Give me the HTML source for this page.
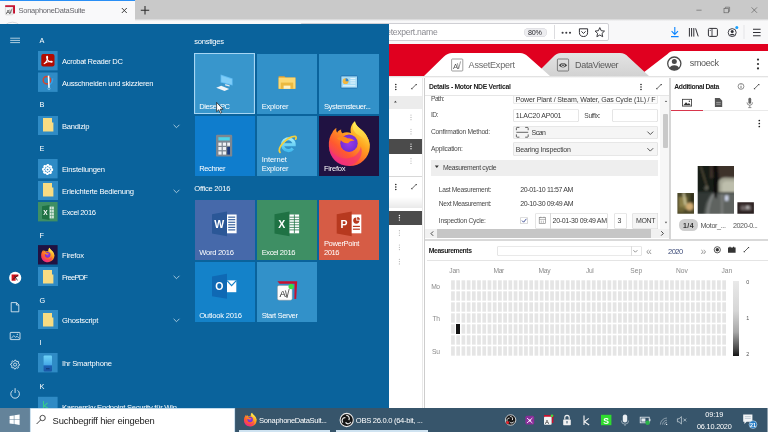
<!DOCTYPE html>
<html lang="de"><head><meta charset="utf-8"><title>SonaphoneDataSuite</title>
<style>
html,body{margin:0;padding:0;}
body{width:768px;height:432px;overflow:hidden;position:relative;background:#fff;font-family:"Liberation Sans",sans-serif;}
.t{position:absolute;white-space:nowrap;}
.r{position:absolute;}
svg{position:absolute;overflow:visible;}
</style></head><body><div id="root" style="position:absolute;left:0;top:0;width:768px;height:432px;will-change:transform;">
<div class="r" style="left:0px;top:0px;width:768px;height:19.4px;background:#c9c9c9;"></div>
<div class="r" style="left:0px;top:19.4px;width:768px;height:25px;background:#f8f8f9;"></div>
<div class="r" style="left:0px;top:19.4px;width:768px;height:1.8px;background:linear-gradient(#d2d2d2,#f8f8f9);"></div>
<div class="r" style="left:388px;top:43.6px;width:380px;height:0.8px;background:#b8001a;"></div>
<div class="r" style="left:0px;top:0px;width:135px;height:24px;background:#f9f9fa;"></div>
<div class="r" style="left:0px;top:0px;width:135px;height:1.2px;background:#2a8ff5;"></div>
<div class="t" style="left:18.50px;top:5px;font-size:7.5px;line-height:12px;color:#66666c;letter-spacing:-0.254px;">SonaphoneDataSuite</div>
<svg style="left:0;top:0" width="40" height="24" viewBox="0 0 40 24"><circle cx="12.4" cy="32.6" r="10.4" fill="#fdfdfd" stroke="#c9c9cc" stroke-width="0.7"/></svg>
<div class="r" style="left:388px;top:44.2px;width:380px;height:32px;background:#e0001f;"></div>
<div class="r" style="left:388px;top:76px;width:380px;height:332px;background:#ffffff;"></div>
<div class="r" style="left:300px;top:22.5px;width:308.5px;height:18.2px;background:#ffffff;border:0.8px solid #cfcfd4;border-radius:2px;box-sizing:border-box;"></div>
<div class="t" style="left:386.20px;top:26px;font-size:8.6px;line-height:12px;color:#8a8a90;letter-spacing:-0.283px;">etexpert.name</div>
<div class="r" style="left:523.5px;top:28px;width:23px;height:9.4px;background:#ededf0;border-radius:5px;box-shadow:inset 0 0 0 0.5px #d5d5da;"></div>
<div class="t" style="left:528.00px;top:27px;font-size:7.2px;line-height:12px;color:#2a2a2e;letter-spacing:-0.200px;">80%</div>
<div class="r" style="left:554.3px;top:25px;width:0.7px;height:14px;background:#dcdcdf;"></div>
<svg style="left:0;top:0" width="768" height="432" viewBox="0 0 768 432"><circle cx="562.6" cy="32.7" r="1.05" fill="#3a3a40"/><circle cx="566.3" cy="32.7" r="1.05" fill="#3a3a40"/><circle cx="570" cy="32.7" r="1.05" fill="#3a3a40"/><path d="M579.4 28.8H587.6V32.4A4.1 4.1 0 0 1 579.4 32.4Z" fill="none" stroke="#2f2f35" stroke-width="1" stroke-linejoin="round"/><path d="M581.4 31.4L583.5 33.4L585.6 31.4" fill="none" stroke="#2f2f35" stroke-width="1"/><path d="M599.8 27.6L601.2 30.7L604.5 31.1L602 33.4L602.7 36.7L599.8 35L596.9 36.7L597.6 33.4L595.1 31.1L598.4 30.7Z" fill="none" stroke="#2f2f35" stroke-width="0.95" stroke-linejoin="round"/><path d="M674.8 27V34.2M671.6 31.2L674.8 34.4L678 31.2M671 36.6H678.6" fill="none" stroke="#0a84ff" stroke-width="1.1"/><path d="M689.4 28V36.6M691.6 28V36.6M693.8 28V36.6M695.6 28.4L698.2 36.4" fill="none" stroke="#2f2f35" stroke-width="1"/><rect x="708.4" y="28.4" width="9" height="8" rx="1.2" fill="none" stroke="#2f2f35" stroke-width="1"/><path d="M712 28.4V36.4" stroke="#2f2f35" stroke-width="0.9"/><path d="M709.6 30.4H711" stroke="#2f2f35" stroke-width="0.7"/><circle cx="732.2" cy="32.6" r="4" fill="none" stroke="#2f2f35" stroke-width="0.9"/><circle cx="732.2" cy="31.5" r="1.5" fill="#2f2f35"/><path d="M729.4 35.2A3 2.4 0 0 1 735 35.2" fill="#2f2f35"/><circle cx="736.8" cy="27.4" r="1.5" fill="#18a0ff"/><path d="M744 25V39" stroke="#dcdcdf" stroke-width="0.7"/><path d="M753 29.2H760.6M753 32.5H760.6M753 35.8H760.6" stroke="#2f2f35" stroke-width="1.1"/><path d="M696.4 10.2H701.6" stroke="#5a5a5a" stroke-width="0.6"/><rect x="724" y="8.4" width="4.4" height="4.4" fill="none" stroke="#5a5a5a" stroke-width="0.6"/><path d="M725.4 8.4V7.2H729.6V11.4H728.4" fill="none" stroke="#5a5a5a" stroke-width="0.6"/><path d="M751.6 7.4L757 12.8M757 7.4L751.6 12.8" stroke="#5a5a5a" stroke-width="0.65"/><path d="M121.8 8L126.8 13M126.8 8L121.8 13" stroke="#2a2a2a" stroke-width="0.9"/><path d="M140.8 10.2H149.2M145 6V14.4" stroke="#2a2a2a" stroke-width="1.05"/><path d="M5.2 5.2H15V13.6H13V7H5.2Z" fill="#c8102e"/><rect x="5.4" y="7" width="7.6" height="7.8" rx="0.8" fill="#f6f6f6" stroke="#999" stroke-width="0.3"/><text x="5.9" y="13.6" font-family="Liberation Sans, sans-serif" font-size="6.2" fill="#222">A</text><path d="M9.8 9.6L10.6 13.4L12 8.6" fill="none" stroke="#222" stroke-width="0.5"/></svg>
<svg style="left:0;top:0" width="768" height="432" viewBox="0 0 768 432"><defs><linearGradient id="gt" x1="0" y1="0" x2="0" y2="1"><stop offset="0" stop-color="#e4e4e4"/><stop offset="1" stop-color="#d2d2d2"/></linearGradient></defs><path d="M768 51H674Q670 51 667.6 54L639 76H768Z" fill="#ffffff"/><path d="M534 76L553 57Q556.6 53 561 53H620Q625 53 628.4 57L649 76Z" fill="url(#gt)"/><path d="M424 76L444 56.6Q447.6 53 452 53H520Q524.6 53 528 56.6L550 76Z" fill="#ffffff"/><rect x="451.6" y="59" width="11.2" height="12" rx="0.8" fill="none" stroke="#777" stroke-width="0.7"/><text x="453" y="68.6" font-family="Liberation Sans, sans-serif" font-size="7.6" fill="#555">A</text><path d="M457.4 63.2L458.6 68.8L460.6 61.4" fill="none" stroke="#555" stroke-width="0.6"/><rect x="557.4" y="59" width="11.2" height="12" rx="0.8" fill="none" stroke="#555" stroke-width="0.7"/><path d="M558.8 65.2Q563 60.6 567.2 65.2Q563 69.8 558.8 65.2Z" fill="#444"/><circle cx="563" cy="65.2" r="1.7" fill="#ddd"/><circle cx="563" cy="65.2" r="0.9" fill="#444"/><circle cx="674.3" cy="63.6" r="6.6" fill="#fff" stroke="#4a4a4a" stroke-width="1.3"/><circle cx="674.3" cy="61.4" r="2.5" fill="#4a4a4a"/><path d="M669.6 68.2A4.8 3.8 0 0 1 679 68.2A6.4 6.4 0 0 1 669.6 68.2Z" fill="#4a4a4a"/><circle cx="758" cy="59.6" r="1.1" fill="#333"/><circle cx="758" cy="64" r="1.1" fill="#333"/><circle cx="758" cy="68.4" r="1.1" fill="#333"/></svg>
<div class="t" style="left:468.60px;top:59px;font-size:9.0px;line-height:12px;color:#6a6a6a;letter-spacing:-0.211px;">AssetExpert</div>
<div class="t" style="left:575.00px;top:59px;font-size:9.0px;line-height:12px;color:#5a5a5a;letter-spacing:-0.306px;">DataViewer</div>
<div class="t" style="left:689.80px;top:57px;font-size:9.0px;line-height:12px;color:#555;letter-spacing:-0.370px;">smoeck</div>
<div class="r" style="left:388px;top:76px;width:380px;height:2.2px;background:linear-gradient(#d9d9d9,#ffffff);"></div>
<div class="r" style="left:422px;top:78px;width:0.7px;height:330px;background:#e9e9e9;"></div>
<div class="r" style="left:424px;top:78px;width:0.9px;height:330px;background:#cdcdcd;"></div>
<div class="r" style="left:669px;top:78px;width:1.7px;height:162px;background:#d6d6d6;"></div>
<div class="r" style="left:388.5px;top:95.6px;width:33.6px;height:13px;background:#ececec;"></div>
<div class="r" style="left:388.5px;top:138.6px;width:33.6px;height:15px;background:#4b4b4b;"></div>
<div class="r" style="left:388.5px;top:176px;width:33.6px;height:0.8px;background:#d8d8d8;"></div>
<div class="r" style="left:388.5px;top:196.6px;width:33.6px;height:11.6px;background:linear-gradient(#ffffff,#e9e9e9);"></div>
<div class="r" style="left:388.5px;top:210.8px;width:33.6px;height:13.8px;background:#4b4b4b;"></div>
<div class="t" style="left:431.00px;top:93px;font-size:6.7px;line-height:12px;color:#4a4a4a;letter-spacing:-0.536px;">Path:</div>
<div class="r" style="left:512.8px;top:90px;width:145.4px;height:13.6px;background:#fbfbfb;box-shadow:inset 0 0 0 0.6px #dcdcdc;border-radius:2px;"></div>
<div class="t" style="left:515.80px;top:94px;font-size:7.0px;line-height:12px;color:#3a3a3a;letter-spacing:-0.149px;">Power Plant / Steam, Water, Gas Cycle (1L) / F</div>
<div class="r" style="left:424.6px;top:78.2px;width:235.8px;height:17.2px;background:#ffffff;"></div>
<div class="t" style="left:429.00px;top:81px;font-size:6.8px;line-height:12px;color:#222;letter-spacing:-0.287px;font-weight:bold;">Details - Motor NDE Vertical</div>
<div class="r" style="left:424.6px;top:95.2px;width:244.6px;height:0.9px;background:#e6e6e6;"></div>
<div class="t" style="left:431.00px;top:109px;font-size:6.7px;line-height:12px;color:#4a4a4a;letter-spacing:-0.488px;">ID:</div>
<div class="r" style="left:512.8px;top:108.6px;width:66.2px;height:13.8px;background:#ffffff;box-shadow:inset 0 0 0 0.6px #d4d4d4;border-radius:2px;"></div>
<div class="t" style="left:515.80px;top:110px;font-size:7.0px;line-height:12px;color:#3a3a3a;letter-spacing:-0.198px;">1LAC20 AP001</div>
<div class="t" style="left:584.30px;top:110px;font-size:6.7px;line-height:12px;color:#4a4a4a;letter-spacing:-0.382px;">Suffix:</div>
<div class="r" style="left:612.3px;top:108.6px;width:45.9px;height:13.8px;background:#ffffff;box-shadow:inset 0 0 0 0.6px #d4d4d4;border-radius:2px;"></div>
<div class="t" style="left:431.00px;top:126px;font-size:6.7px;line-height:12px;color:#4a4a4a;letter-spacing:-0.250px;">Confirmation Method:</div>
<div class="r" style="left:512.8px;top:125.5px;width:145.4px;height:13.8px;background:#f5f5f5;box-shadow:inset 0 0 0 0.6px #d9d9d9;border-radius:2px;"></div>
<div class="t" style="left:531.60px;top:127px;font-size:7.0px;line-height:12px;color:#3a3a3a;letter-spacing:-0.520px;">Scan</div>
<div class="t" style="left:431.00px;top:143px;font-size:6.7px;line-height:12px;color:#4a4a4a;letter-spacing:-0.258px;">Application:</div>
<div class="r" style="left:512.8px;top:142.4px;width:145.4px;height:13.6px;background:#f5f5f5;box-shadow:inset 0 0 0 0.6px #d9d9d9;border-radius:2px;"></div>
<div class="t" style="left:515.80px;top:144px;font-size:7.0px;line-height:12px;color:#3a3a3a;letter-spacing:-0.164px;">Bearing Inspection</div>
<div class="r" style="left:431.2px;top:159.6px;width:227px;height:16px;background:#eeeeee;"></div>
<div class="t" style="left:443.00px;top:162px;font-size:6.8px;line-height:12px;color:#444;letter-spacing:-0.341px;">Measurement cycle</div>
<div class="t" style="left:438.80px;top:184px;font-size:6.7px;line-height:12px;color:#4a4a4a;letter-spacing:-0.291px;">Last Measurement:</div>
<div class="t" style="left:520.20px;top:184px;font-size:7.0px;line-height:12px;color:#3a3a3a;letter-spacing:-0.363px;">20-01-10 11:57 AM</div>
<div class="t" style="left:438.80px;top:198px;font-size:6.7px;line-height:12px;color:#4a4a4a;letter-spacing:-0.341px;">Next Measurement:</div>
<div class="t" style="left:520.20px;top:198px;font-size:7.0px;line-height:12px;color:#3a3a3a;letter-spacing:-0.383px;">20-10-30 09:49 AM</div>
<div class="t" style="left:438.80px;top:215px;font-size:6.7px;line-height:12px;color:#4a4a4a;letter-spacing:-0.239px;">Inspection Cycle:</div>
<div class="r" style="left:520.2px;top:216.6px;width:7.8px;height:7.8px;background:#ffffff;box-shadow:inset 0 0 0 0.6px #bdbdbd;border-radius:1.6px;"></div>
<div class="r" style="left:535.4px;top:213px;width:73px;height:15.6px;background:#ffffff;box-shadow:inset 0 0 0 0.6px #d4d4d4;border-radius:2px;"></div>
<div class="r" style="left:549.6px;top:213px;width:0.6px;height:15.6px;background:#d9d9d9;"></div>
<div class="t" style="left:552.60px;top:215px;font-size:7.0px;line-height:12px;color:#3a3a3a;letter-spacing:-0.321px;">20-01-30 09:49 AM</div>
<div class="r" style="left:614px;top:213px;width:13.3px;height:15.6px;background:#ffffff;box-shadow:inset 0 0 0 0.6px #d4d4d4;border-radius:2px;"></div>
<div class="t" style="left:617.60px;top:215px;font-size:7.0px;line-height:12px;color:#3a3a3a;letter-spacing:0.000px;">3</div>
<div class="r" style="left:632.3px;top:213px;width:26px;height:15.6px;background:#f5f5f5;box-shadow:inset 0 0 0 0.6px #d9d9d9;border-radius:2px 0 0 2px;"></div>
<div class="t" style="left:636.00px;top:215px;font-size:7.0px;line-height:12px;color:#3a3a3a;letter-spacing:-0.338px;">MONT</div>
<div class="r" style="left:424.6px;top:228.8px;width:244.6px;height:9.4px;background:#f1f1f1;"></div>
<div class="r" style="left:437.4px;top:229.4px;width:213.6px;height:8.2px;background:#c6c6c6;"></div>
<div class="r" style="left:660.4px;top:96px;width:8.8px;height:132.8px;background:#f7f7f7;"></div>
<div class="r" style="left:663.4px;top:113.8px;width:4.2px;height:33.8px;background:#c9c9c9;border-radius:1px;"></div>
<div class="r" style="left:424.6px;top:239px;width:343.4px;height:1.7px;background:#d9d9d9;"></div>
<div class="t" style="left:428.80px;top:245px;font-size:6.8px;line-height:12px;color:#222;letter-spacing:-0.403px;font-weight:bold;">Measurements</div>
<div class="r" style="left:497.2px;top:245.6px;width:144.6px;height:10.6px;background:#ffffff;box-shadow:inset 0 0 0 0.6px #d4d4d4;border-radius:2px;"></div>
<div class="r" style="left:631.4px;top:246px;width:0.6px;height:9.8px;background:#dddddd;"></div>
<div class="t" style="left:668.00px;top:246px;font-size:7.6px;line-height:12px;color:#3d4b78;letter-spacing:-0.570px;">2020</div>
<div class="t" style="left:646.00px;top:243px;font-size:10.5px;line-height:16px;color:#9a9a9a;letter-spacing:0.000px;">«</div>
<div class="t" style="left:700.60px;top:243px;font-size:10.5px;line-height:16px;color:#9a9a9a;letter-spacing:0.000px;">»</div>
<div class="r" style="left:426.6px;top:259.6px;width:341.4px;height:0.9px;background:#e4e4e4;"></div>
<div class="t" style="left:449.30px;top:265px;font-size:6.7px;line-height:12px;color:#8a8a8a;letter-spacing:-0.144px;">Jan</div>
<div class="t" style="left:493.40px;top:265px;font-size:6.7px;line-height:12px;color:#8a8a8a;letter-spacing:-0.312px;">Mar</div>
<div class="t" style="left:538.60px;top:265px;font-size:6.7px;line-height:12px;color:#8a8a8a;letter-spacing:-0.332px;">May</div>
<div class="t" style="left:586.00px;top:265px;font-size:6.7px;line-height:12px;color:#8a8a8a;letter-spacing:-0.388px;">Jul</div>
<div class="t" style="left:630.20px;top:265px;font-size:6.7px;line-height:12px;color:#8a8a8a;letter-spacing:0.037px;">Sep</div>
<div class="t" style="left:676.00px;top:265px;font-size:6.7px;line-height:12px;color:#8a8a8a;letter-spacing:-0.063px;">Nov</div>
<div class="t" style="left:721.50px;top:265px;font-size:6.7px;line-height:12px;color:#8a8a8a;letter-spacing:0.006px;">Jan</div>
<div class="t" style="left:431.20px;top:281px;font-size:6.7px;line-height:12px;color:#8a8a8a;letter-spacing:-0.513px;">Mo</div>
<div class="t" style="left:432.40px;top:313px;font-size:6.7px;line-height:12px;color:#8a8a8a;letter-spacing:-0.205px;">Th</div>
<div class="t" style="left:432.00px;top:346px;font-size:6.7px;line-height:12px;color:#8a8a8a;letter-spacing:-0.208px;">Su</div>
<div class="t" style="left:746.20px;top:276px;font-size:5.4px;line-height:12px;color:#555;letter-spacing:0.000px;">0</div>
<div class="t" style="left:746.20px;top:312px;font-size:5.4px;line-height:12px;color:#555;letter-spacing:0.000px;">1</div>
<div class="t" style="left:746.20px;top:348px;font-size:5.4px;line-height:12px;color:#555;letter-spacing:0.000px;">2</div>
<svg style="left:0;top:0" width="768" height="432" viewBox="0 0 768 432"><rect x="451.10" y="280.3" width="3.7" height="75.4" fill="#e5e5e5"/><rect x="456.31" y="280.3" width="3.7" height="75.4" fill="#e5e5e5"/><rect x="461.53" y="280.3" width="3.7" height="75.4" fill="#e5e5e5"/><rect x="466.75" y="280.3" width="3.7" height="75.4" fill="#e5e5e5"/><rect x="471.96" y="280.3" width="3.7" height="75.4" fill="#e5e5e5"/><rect x="477.18" y="280.3" width="3.7" height="75.4" fill="#e5e5e5"/><rect x="482.39" y="280.3" width="3.7" height="75.4" fill="#e5e5e5"/><rect x="487.61" y="280.3" width="3.7" height="75.4" fill="#e5e5e5"/><rect x="492.82" y="280.3" width="3.7" height="75.4" fill="#e5e5e5"/><rect x="498.04" y="280.3" width="3.7" height="75.4" fill="#e5e5e5"/><rect x="503.25" y="280.3" width="3.7" height="75.4" fill="#e5e5e5"/><rect x="508.47" y="280.3" width="3.7" height="75.4" fill="#e5e5e5"/><rect x="513.68" y="280.3" width="3.7" height="75.4" fill="#e5e5e5"/><rect x="518.89" y="280.3" width="3.7" height="75.4" fill="#e5e5e5"/><rect x="524.11" y="280.3" width="3.7" height="75.4" fill="#e5e5e5"/><rect x="529.33" y="280.3" width="3.7" height="75.4" fill="#e5e5e5"/><rect x="534.54" y="280.3" width="3.7" height="75.4" fill="#e5e5e5"/><rect x="539.75" y="280.3" width="3.7" height="75.4" fill="#e5e5e5"/><rect x="544.97" y="280.3" width="3.7" height="75.4" fill="#e5e5e5"/><rect x="550.19" y="280.3" width="3.7" height="75.4" fill="#e5e5e5"/><rect x="555.40" y="280.3" width="3.7" height="75.4" fill="#e5e5e5"/><rect x="560.62" y="280.3" width="3.7" height="75.4" fill="#e5e5e5"/><rect x="565.83" y="280.3" width="3.7" height="75.4" fill="#e5e5e5"/><rect x="571.05" y="280.3" width="3.7" height="75.4" fill="#e5e5e5"/><rect x="576.26" y="280.3" width="3.7" height="75.4" fill="#e5e5e5"/><rect x="581.48" y="280.3" width="3.7" height="75.4" fill="#e5e5e5"/><rect x="586.69" y="280.3" width="3.7" height="75.4" fill="#e5e5e5"/><rect x="591.90" y="280.3" width="3.7" height="75.4" fill="#e5e5e5"/><rect x="597.12" y="280.3" width="3.7" height="75.4" fill="#e5e5e5"/><rect x="602.34" y="280.3" width="3.7" height="75.4" fill="#e5e5e5"/><rect x="607.55" y="280.3" width="3.7" height="75.4" fill="#e5e5e5"/><rect x="612.76" y="280.3" width="3.7" height="75.4" fill="#e5e5e5"/><rect x="617.98" y="280.3" width="3.7" height="75.4" fill="#e5e5e5"/><rect x="623.20" y="280.3" width="3.7" height="75.4" fill="#e5e5e5"/><rect x="628.41" y="280.3" width="3.7" height="75.4" fill="#e5e5e5"/><rect x="633.62" y="280.3" width="3.7" height="75.4" fill="#e5e5e5"/><rect x="638.84" y="280.3" width="3.7" height="75.4" fill="#e5e5e5"/><rect x="644.06" y="280.3" width="3.7" height="75.4" fill="#e5e5e5"/><rect x="649.27" y="280.3" width="3.7" height="75.4" fill="#e5e5e5"/><rect x="654.49" y="280.3" width="3.7" height="75.4" fill="#e5e5e5"/><rect x="659.70" y="280.3" width="3.7" height="75.4" fill="#e5e5e5"/><rect x="664.91" y="280.3" width="3.7" height="75.4" fill="#e5e5e5"/><rect x="670.13" y="280.3" width="3.7" height="75.4" fill="#e5e5e5"/><rect x="675.35" y="280.3" width="3.7" height="75.4" fill="#e5e5e5"/><rect x="680.56" y="280.3" width="3.7" height="75.4" fill="#e5e5e5"/><rect x="685.77" y="280.3" width="3.7" height="75.4" fill="#e5e5e5"/><rect x="690.99" y="280.3" width="3.7" height="75.4" fill="#e5e5e5"/><rect x="696.21" y="280.3" width="3.7" height="75.4" fill="#e5e5e5"/><rect x="701.42" y="280.3" width="3.7" height="75.4" fill="#e5e5e5"/><rect x="706.63" y="280.3" width="3.7" height="75.4" fill="#e5e5e5"/><rect x="711.85" y="280.3" width="3.7" height="75.4" fill="#e5e5e5"/><rect x="717.07" y="280.3" width="3.7" height="75.4" fill="#e5e5e5"/><rect x="722.28" y="280.3" width="3.7" height="75.4" fill="#e5e5e5"/><rect x="450" y="289.70" width="277" height="1.6" fill="#ffffff"/><rect x="450" y="300.70" width="277" height="1.6" fill="#ffffff"/><rect x="450" y="311.70" width="277" height="1.6" fill="#ffffff"/><rect x="450" y="322.70" width="277" height="1.6" fill="#ffffff"/><rect x="450" y="333.70" width="277" height="1.6" fill="#ffffff"/><rect x="450" y="344.70" width="277" height="1.6" fill="#ffffff"/></svg>
<div class="r" style="left:456.3px;top:324.3px;width:3.7px;height:9.4px;background:#141414;"></div>
<div class="r" style="left:733.4px;top:281.2px;width:5.5px;height:74.4px;background:linear-gradient(#e9e9e9,#d6d6d6 40%,#a8a8a8 68%,#4a4a4a 90%,#141414);"></div>
<div class="t" style="left:674.30px;top:81px;font-size:6.8px;line-height:12px;color:#222;letter-spacing:-0.353px;font-weight:bold;">Additional Data</div>
<div class="r" style="left:671.4px;top:110.2px;width:96.6px;height:0.8px;background:#e9e9e9;"></div>
<div class="r" style="left:671.4px;top:110px;width:31.4px;height:1.1px;background:#d8364c;"></div>
<svg style="left:0;top:0" width="768" height="432" viewBox="0 0 768 432"><defs><filter id="bl" x="-5%" y="-5%" width="110%" height="110%"><feGaussianBlur stdDeviation="0.9"/></filter><clipPath id="c1"><rect x="697.7" y="166" width="36.3" height="47.8"/></clipPath><clipPath id="c2"><rect x="677.4" y="193.1" width="16.6" height="20.7"/></clipPath><clipPath id="c3"><rect x="737.4" y="202.2" width="16.5" height="11.6"/></clipPath></defs><g clip-path="url(#c1)"><g filter="url(#bl)"><rect x="695" y="163" width="42" height="54" fill="#181c17"/><rect x="710" y="163" width="27" height="15" fill="#3e302b"/><path d="M718.6 194V182Q719.5 177.2 726 177.4L737 178V194Z" fill="#a4a594"/><path d="M722 193V184Q723 181 727 181L737 181.4V193Z" fill="#bdbeac"/><path d="M695 192H737V217H695Z" fill="#333836"/><path d="M737 193.4H712Q705 200 704 217H737Z" fill="#5f6361"/><path d="M714 193.6Q708.5 201 707.6 217" fill="none" stroke="#a9adab" stroke-width="0.9"/><path d="M722 194V217" stroke="#8b8f8d" stroke-width="1.2"/><path d="M712.6 163L714 196L716.8 199L718.6 177L717.6 163Z" fill="#0c0e0c"/><path d="M700.6 166L707.4 188" stroke="#8a7a5a" stroke-width="0.7"/><circle cx="706.4" cy="188.2" r="1.5" fill="none" stroke="#a8a89a" stroke-width="0.7"/><rect x="725" y="195.4" width="3.4" height="5.4" fill="#cfd6ea"/></g></g><g clip-path="url(#c2)"><g filter="url(#bl)"><rect x="675" y="191" width="21" height="25" fill="#4e4a2a"/><rect x="679" y="197" width="8" height="12" fill="#8c8048"/><path d="M683.6 193L685.4 205" stroke="#d8d2a8" stroke-width="1.6"/><ellipse cx="689.6" cy="206.6" rx="3.6" ry="3.8" fill="#d0ab72"/><rect x="678" y="207" width="6" height="5" fill="#6d6436"/><rect x="690.6" y="193" width="3.4" height="9" fill="#2c2a1a"/></g></g><g clip-path="url(#c3)"><g filter="url(#bl)"><rect x="735" y="200" width="21" height="16" fill="#2c2323"/><rect x="740.6" y="205.6" width="10.6" height="4.6" fill="#6e6565"/><rect x="746.6" y="206" width="2" height="2.6" fill="#d6d6d6"/><rect x="737.4" y="202.2" width="16.5" height="2" fill="#3a2c2c"/></g></g></svg>
<div class="r" style="left:679px;top:219.3px;width:18.8px;height:11.5px;background:#cfcfcf;border-radius:5.5px;"></div>
<div class="t" style="left:683.00px;top:220px;font-size:7px;line-height:12px;color:#333;letter-spacing:0.435px;font-weight:bold;">1/4</div>
<div class="t" style="left:700.50px;top:220px;font-size:7.2px;line-height:12px;color:#555;letter-spacing:-0.363px;">Motor_...</div>
<div class="t" style="left:733.00px;top:220px;font-size:7.2px;line-height:12px;color:#555;letter-spacing:-0.451px;">2020-0...</div>
<svg style="left:0;top:0" width="768" height="432" viewBox="0 0 768 432"><circle cx="395.8" cy="84.5" r="0.8" fill="#222"/><circle cx="395.8" cy="87" r="0.8" fill="#222"/><circle cx="395.8" cy="89.5" r="0.8" fill="#222"/><path d="M411.6 89.0L416.4 84.19999999999999" stroke="#333" stroke-width="0.75"/><path d="M415.2 83.89999999999999H416.7V85.39999999999999Z M412.8 89.3H411.3V87.8Z" fill="#333"/><circle cx="395.8" cy="184.5" r="0.8" fill="#222"/><circle cx="395.8" cy="187" r="0.8" fill="#222"/><circle cx="395.8" cy="189.5" r="0.8" fill="#222"/><path d="M411.6 189.0L416.4 184.2" stroke="#333" stroke-width="0.75"/><path d="M415.2 183.9H416.7V185.4Z M412.8 189.29999999999998H411.3V187.79999999999998Z" fill="#333"/><circle cx="411" cy="115.10000000000001" r="0.6" fill="#b4b4b4"/><circle cx="411" cy="117.4" r="0.6" fill="#b4b4b4"/><circle cx="411" cy="119.7" r="0.6" fill="#b4b4b4"/><circle cx="411" cy="129.29999999999998" r="0.6" fill="#b4b4b4"/><circle cx="411" cy="131.6" r="0.6" fill="#b4b4b4"/><circle cx="411" cy="133.9" r="0.6" fill="#b4b4b4"/><circle cx="411" cy="158.7" r="0.6" fill="#b4b4b4"/><circle cx="411" cy="161" r="0.6" fill="#b4b4b4"/><circle cx="411" cy="163.3" r="0.6" fill="#b4b4b4"/><circle cx="411" cy="144.1" r="0.7" fill="#ffffff"/><circle cx="411" cy="146.4" r="0.7" fill="#ffffff"/><circle cx="411" cy="148.70000000000002" r="0.7" fill="#ffffff"/><circle cx="399.4" cy="215.5" r="0.7" fill="#ffffff"/><circle cx="399.4" cy="217.8" r="0.7" fill="#ffffff"/><circle cx="399.4" cy="220.10000000000002" r="0.7" fill="#ffffff"/><circle cx="399.4" cy="230.7" r="0.6" fill="#b4b4b4"/><circle cx="399.4" cy="233" r="0.6" fill="#b4b4b4"/><circle cx="399.4" cy="235.3" r="0.6" fill="#b4b4b4"/><circle cx="399.4" cy="245.0" r="0.6" fill="#b4b4b4"/><circle cx="399.4" cy="247.3" r="0.6" fill="#b4b4b4"/><circle cx="399.4" cy="249.60000000000002" r="0.6" fill="#b4b4b4"/><circle cx="399.4" cy="259.3" r="0.6" fill="#b4b4b4"/><circle cx="399.4" cy="261.6" r="0.6" fill="#b4b4b4"/><circle cx="399.4" cy="263.90000000000003" r="0.6" fill="#b4b4b4"/><path d="M394 102.6L395.4 100.8L396.8 102.6Z" fill="#444"/><circle cx="641" cy="84.5" r="0.8" fill="#222"/><circle cx="641" cy="87" r="0.8" fill="#222"/><circle cx="641" cy="89.5" r="0.8" fill="#222"/><path d="M656.6 89.0L661.4 84.19999999999999" stroke="#333" stroke-width="0.75"/><path d="M660.2 83.89999999999999H661.7V85.39999999999999Z M657.8 89.3H656.3V87.8Z" fill="#333"/><circle cx="741" cy="86.4" r="2.9" fill="none" stroke="#444" stroke-width="0.6"/><path d="M741 85.8V88.2M741 84.4V85" stroke="#444" stroke-width="0.7"/><path d="M754.2 89.0L759.0 84.19999999999999" stroke="#333" stroke-width="0.75"/><path d="M757.8000000000001 83.89999999999999H759.3000000000001V85.39999999999999Z M755.4 89.3H753.9V87.8Z" fill="#333"/><path d="M516.4 130.2V128.2Q516.4 127.4 517.2 127.4H519.4M525.2 127.4H527.4Q528.2 127.4 528.2 128.2V130.2M528.2 134.4V136.4Q528.2 137.2 527.4 137.2H525.2M519.4 137.2H517.2Q516.4 137.2 516.4 136.4V134.4M516.4 132.3H528.2" fill="none" stroke="#333" stroke-width="0.75"/><path d="M647.4 131.6L650.3 134.5L653.2 131.6" fill="none" stroke="#555" stroke-width="1"/><path d="M647.4 148.2L650.3 151.1L653.2 148.2" fill="none" stroke="#555" stroke-width="1"/><path d="M633.4 250.2L635.4 252.2L637.4 250.2" fill="none" stroke="#666" stroke-width="0.7"/><path d="M434.8 165.4H438.8L436.8 168Z" fill="#333"/><path d="M522 220.6L523.6 222.2L526.4 218.8" fill="none" stroke="#2c3e8c" stroke-width="0.9"/><rect x="539.2" y="217.6" width="6.4" height="5.8" fill="none" stroke="#777" stroke-width="0.6"/><path d="M539.2 219.4H545.6M540.8 216.6V218M544 216.6V218M541.3 220.6V222.8M543.4 220.6V222.8" stroke="#777" stroke-width="0.5"/><path d="M433.2 231.4L431 233.6L433.2 235.8" fill="none" stroke="#333" stroke-width="0.9"/><path d="M661.2 231.2L663.4 233.4L661.2 235.6" fill="none" stroke="#333" stroke-width="0.9"/><path d="M664.8 102L666 100.4L667.2 102Z" fill="#555"/><path d="M664.8 221.8L666 223.4L667.2 221.8Z" fill="#555"/><circle cx="717.3" cy="249.8" r="3.1" fill="none" stroke="#333" stroke-width="0.8"/><circle cx="717.3" cy="249.8" r="1.7" fill="#333"/><path d="M728 247.6H729.4V246.8H730.6V247.6H733V246.8H734.2V247.6H735.6V252.8H728Z" fill="#333"/><path d="M744.0 252.0L748.8 247.2" stroke="#333" stroke-width="0.75"/><path d="M747.6 246.9H749.1V248.4Z M745.1999999999999 252.29999999999998H743.6999999999999V250.79999999999998Z" fill="#333"/><rect x="682.4" y="99.3" width="9.2" height="6.8" fill="none" stroke="#333" stroke-width="0.8"/><path d="M683.4 105.2L686 102.2L687.8 104L689 103L690.8 105.2Z" fill="#333"/><circle cx="689.4" cy="101.2" r="0.7" fill="#333"/><path d="M714.9 98.1H719.6L722.2 100.7V107H714.9Z" fill="#555"/><path d="M716.2 102.4H720.8M716.2 104.2H720.8" stroke="#e8e8e8" stroke-width="0.5"/><rect x="748.4" y="97.8" width="2.8" height="6" rx="1.4" fill="#666"/><path d="M747 102.4A2.8 2.8 0 0 0 752.6 102.4M749.8 105.2V107.4M748.2 107.6H751.4" fill="none" stroke="#666" stroke-width="0.7"/><circle cx="759.3" cy="120.5" r="0.85" fill="#222"/><circle cx="759.3" cy="123.5" r="0.85" fill="#222"/><circle cx="759.3" cy="126.5" r="0.85" fill="#222"/></svg>
<div class="r" style="left:0px;top:24px;width:388.7px;height:384px;background:#0a639c;"></div>
<div class="t" style="left:39.50px;top:35px;font-size:7.3px;line-height:12px;color:#ffffff;letter-spacing:0.000px;">A</div>
<div class="t" style="left:62.00px;top:56px;font-size:7.6px;line-height:12px;color:#ffffff;letter-spacing:-0.332px;">Acrobat Reader DC</div>
<div class="t" style="left:62.00px;top:78px;font-size:7.6px;line-height:12px;color:#ffffff;letter-spacing:-0.268px;">Ausschneiden und skizzieren</div>
<div class="t" style="left:39.50px;top:99px;font-size:7.3px;line-height:12px;color:#ffffff;letter-spacing:0.000px;">B</div>
<div class="t" style="left:62.00px;top:121px;font-size:7.6px;line-height:12px;color:#ffffff;letter-spacing:-0.235px;">Bandizip</div>
<div class="t" style="left:39.50px;top:143px;font-size:7.3px;line-height:12px;color:#ffffff;letter-spacing:0.000px;">E</div>
<div class="t" style="left:62.00px;top:164px;font-size:7.6px;line-height:12px;color:#ffffff;letter-spacing:-0.220px;">Einstellungen</div>
<div class="t" style="left:62.00px;top:186px;font-size:7.6px;line-height:12px;color:#ffffff;letter-spacing:-0.234px;">Erleichterte Bedienung</div>
<div class="t" style="left:62.00px;top:207px;font-size:7.6px;line-height:12px;color:#ffffff;letter-spacing:-0.402px;">Excel 2016</div>
<div class="t" style="left:39.50px;top:230px;font-size:7.3px;line-height:12px;color:#ffffff;letter-spacing:0.000px;">F</div>
<div class="t" style="left:62.00px;top:250px;font-size:7.6px;line-height:12px;color:#ffffff;letter-spacing:-0.203px;">Firefox</div>
<div class="t" style="left:62.00px;top:272px;font-size:7.6px;line-height:12px;color:#ffffff;letter-spacing:-0.803px;">FreePDF</div>
<div class="t" style="left:39.50px;top:295px;font-size:7.3px;line-height:12px;color:#ffffff;letter-spacing:0.000px;">G</div>
<div class="t" style="left:62.00px;top:315px;font-size:7.6px;line-height:12px;color:#ffffff;letter-spacing:-0.192px;">Ghostscript</div>
<div class="t" style="left:39.50px;top:337px;font-size:7.3px;line-height:12px;color:#ffffff;letter-spacing:0.000px;">I</div>
<div class="t" style="left:62.00px;top:358px;font-size:7.6px;line-height:12px;color:#ffffff;letter-spacing:-0.185px;">Ihr Smartphone</div>
<div class="t" style="left:39.50px;top:381px;font-size:7.3px;line-height:12px;color:#ffffff;letter-spacing:0.000px;">K</div>
<div class="t" style="left:62.00px;top:402px;font-size:7.6px;line-height:12px;color:#ffffff;letter-spacing:-0.246px;">Kaspersky Endpoint Security für Win</div>
<div class="r" style="left:38px;top:115.5px;width:19.6px;height:19.4px;background:#2f8bc5;"></div>
<svg style="left:42.6px;top:118.4px" width="11" height="14" viewBox="0 0 11 14"><path d="M0 0H9V4.6H10.4V13.6H0Z" fill="#f8dc82"/></svg>
<svg style="left:173px;top:123.5px" width="7" height="5" viewBox="0 0 7 5"><path d="M0.6 0.8L3.5 3.7L6.4 0.8" fill="none" stroke="#c5dcea" stroke-width="0.8"/></svg>
<div class="r" style="left:38px;top:180.5px;width:19.6px;height:19.4px;background:#2f8bc5;"></div>
<svg style="left:42.6px;top:183.4px" width="11" height="14" viewBox="0 0 11 14"><path d="M0 0H9V4.6H10.4V13.6H0Z" fill="#f8dc82"/></svg>
<svg style="left:173px;top:188.5px" width="7" height="5" viewBox="0 0 7 5"><path d="M0.6 0.8L3.5 3.7L6.4 0.8" fill="none" stroke="#c5dcea" stroke-width="0.8"/></svg>
<div class="r" style="left:38px;top:267.0px;width:19.6px;height:19.4px;background:#2f8bc5;"></div>
<svg style="left:42.6px;top:269.9px" width="11" height="14" viewBox="0 0 11 14"><path d="M0 0H9V4.6H10.4V13.6H0Z" fill="#f8dc82"/></svg>
<svg style="left:173px;top:275.0px" width="7" height="5" viewBox="0 0 7 5"><path d="M0.6 0.8L3.5 3.7L6.4 0.8" fill="none" stroke="#c5dcea" stroke-width="0.8"/></svg>
<div class="r" style="left:38px;top:310.0px;width:19.6px;height:19.4px;background:#2f8bc5;"></div>
<svg style="left:42.6px;top:312.9px" width="11" height="14" viewBox="0 0 11 14"><path d="M0 0H9V4.6H10.4V13.6H0Z" fill="#f8dc82"/></svg>
<svg style="left:173px;top:318.0px" width="7" height="5" viewBox="0 0 7 5"><path d="M0.6 0.8L3.5 3.7L6.4 0.8" fill="none" stroke="#c5dcea" stroke-width="0.8"/></svg>
<div class="t" style="left:194.30px;top:36px;font-size:7.6px;line-height:12px;color:#ffffff;letter-spacing:-0.301px;">sonstiges</div>
<div class="t" style="left:194.30px;top:183px;font-size:7.6px;line-height:12px;color:#ffffff;letter-spacing:-0.252px;">Office 2016</div>
<div class="r" style="left:193.9px;top:53px;width:60.9px;height:60.5px;background:#3896cc;box-shadow:inset 0 0 0 1.1px #a6d6f4;"></div>
<div class="r" style="left:257px;top:53.5px;width:60px;height:60px;background:#3291c9;"></div>
<div class="r" style="left:319.2px;top:53.5px;width:60px;height:60px;background:#3291c9;"></div>
<div class="r" style="left:194.5px;top:116px;width:60px;height:60px;background:#0f7dcd;"></div>
<div class="r" style="left:257px;top:116px;width:60px;height:60px;background:#3291c9;"></div>
<div class="r" style="left:319.2px;top:116px;width:60px;height:60px;background:#201242;"></div>
<div class="r" style="left:194.5px;top:200px;width:60px;height:60px;background:#4669aa;"></div>
<div class="r" style="left:257px;top:200px;width:60px;height:60px;background:#3e8f64;"></div>
<div class="r" style="left:319.2px;top:200px;width:60px;height:60px;background:#d65c45;"></div>
<div class="r" style="left:194.5px;top:262.2px;width:60px;height:60px;background:#1482c9;"></div>
<div class="r" style="left:257px;top:262.2px;width:60px;height:60px;background:#3291c9;"></div>
<div class="t" style="left:199.20px;top:101px;font-size:7.6px;line-height:12px;color:#ffffff;letter-spacing:-0.477px;">Dieser PC</div>
<div class="t" style="left:261.70px;top:101px;font-size:7.6px;line-height:12px;color:#ffffff;letter-spacing:-0.216px;">Explorer</div>
<div class="t" style="left:323.90px;top:101px;font-size:7.6px;line-height:12px;color:#ffffff;letter-spacing:-0.376px;">Systemsteuer...</div>
<div class="t" style="left:199.20px;top:163px;font-size:7.6px;line-height:12px;color:#ffffff;letter-spacing:-0.405px;">Rechner</div>
<div class="t" style="left:261.70px;top:154px;font-size:7.6px;line-height:12px;color:#ffffff;letter-spacing:-0.066px;">Internet</div>
<div class="t" style="left:261.70px;top:163px;font-size:7.6px;line-height:12px;color:#ffffff;letter-spacing:-0.216px;">Explorer</div>
<div class="t" style="left:323.90px;top:163px;font-size:7.6px;line-height:12px;color:#ffffff;letter-spacing:-0.270px;">Firefox</div>
<div class="t" style="left:199.20px;top:247px;font-size:7.6px;line-height:12px;color:#ffffff;letter-spacing:-0.281px;">Word 2016</div>
<div class="t" style="left:261.70px;top:247px;font-size:7.6px;line-height:12px;color:#ffffff;letter-spacing:-0.424px;">Excel 2016</div>
<div class="t" style="left:323.90px;top:238px;font-size:7.6px;line-height:12px;color:#ffffff;letter-spacing:-0.364px;">PowerPoint</div>
<div class="t" style="left:323.90px;top:247px;font-size:7.6px;line-height:12px;color:#ffffff;letter-spacing:-0.437px;">2016</div>
<div class="t" style="left:199.20px;top:310px;font-size:7.6px;line-height:12px;color:#ffffff;letter-spacing:-0.220px;">Outlook 2016</div>
<div class="t" style="left:261.70px;top:310px;font-size:7.6px;line-height:12px;color:#ffffff;letter-spacing:-0.386px;">Start Server</div>
<svg style="left:0;top:0" width="768" height="432" viewBox="0 0 768 432"><rect x="38" y="51.00" width="19.6" height="19.4" fill="#2f8bc5"/><rect x="38" y="72.50" width="19.6" height="19.4" fill="#2f8bc5"/><rect x="38" y="159.00" width="19.6" height="19.4" fill="#2f8bc5"/><rect x="38" y="202.00" width="19.6" height="19.4" fill="#3e8f64"/><rect x="38" y="245.10" width="19.6" height="19.4" fill="#201242"/><rect x="38" y="353.00" width="19.6" height="19.4" fill="#2f8bc5"/><rect x="38" y="396.8" width="19.6" height="11.2" fill="#2f8bc5"/><rect x="41.3" y="54" width="13.2" height="12.6" rx="2" fill="#b30b00"/><path d="M44.2 63.6C46.5 62 47.6 59.3 47.6 57.2C47.6 56 46.6 56 46.6 57.2C46.6 59.5 49.3 62.2 51.4 62.2C52.6 62.2 52.4 61.2 51.2 61.2C49 61.2 46 62.3 44.2 63.6Z" fill="none" stroke="#fff" stroke-width="1.1" stroke-linejoin="round"/><circle cx="46.9" cy="80.2" r="3.7" fill="none" stroke="#d8452b" stroke-width="1.5"/><path d="M49.6 84.6Q53 82.6 52.6 78.4" fill="none" stroke="#3aa0e8" stroke-width="1.3"/><path d="M48.5 75.6L49 88" stroke="#ffffff" stroke-width="1.5"/><circle cx="49" cy="88.6" r="1.1" fill="none" stroke="#8fd0f5" stroke-width="0.6"/><polygon points="52.33,169.27 52.28,170.19 51.01,170.72 50.71,171.36 51.11,172.68 50.42,173.30 49.15,172.78 48.48,173.02 47.83,174.23 46.91,174.18 46.38,172.91 45.74,172.61 44.42,173.01 43.80,172.32 44.32,171.05 44.08,170.38 42.87,169.73 42.92,168.81 44.19,168.28 44.49,167.64 44.09,166.32 44.78,165.70 46.05,166.22 46.72,165.98 47.37,164.77 48.29,164.82 48.82,166.09 49.46,166.39 50.78,165.99 51.40,166.68 50.88,167.95 51.12,168.62" fill="none" stroke="#ffffff" stroke-width="1.6" stroke-linejoin="round"/><circle cx="47.6" cy="169.5" r="1.67" fill="none" stroke="#ffffff" stroke-width="1.6"/><path d="M42 206.3L49.6 205V220L42 218.7Z" fill="#1f7244"/><rect x="49.6" y="206.6" width="4.2" height="11.8" fill="#d9eadf"/><path d="M49.6 209.5H53.8M49.6 212.5H53.8M49.6 215.5H53.8M51.7 206.6V218.4" stroke="#3e8f64" stroke-width="0.5"/><text x="43.3" y="215" font-family="Liberation Sans, sans-serif" font-weight="bold" font-size="6.6" fill="#fff">X</text><defs><linearGradient id="ph" x1="0" y1="0" x2="0" y2="1"><stop offset="0" stop-color="#6fd3f7"/><stop offset="0.62" stop-color="#43a6e6"/><stop offset="0.63" stop-color="#1c62b5"/><stop offset="1" stop-color="#1a57a6"/></linearGradient></defs><rect x="43.6" y="355.6" width="8.4" height="15.8" rx="1" fill="url(#ph)"/><rect x="46" y="368.4" width="3.6" height="0.8" fill="#0d2f66"/><path d="M43.5 401V408M47.6 402.8L44 406L47.8 408" fill="none" stroke="#36c98e" stroke-width="1.1"/><path d="M10.2 38.2H20M10.2 40.4H20M10.2 42.6H20" stroke="#e6f0f6" stroke-width="0.75"/><circle cx="15.2" cy="277.8" r="6.1" fill="#fff"/><path d="M11.6 274.6H18.4V276.2L15.6 277.4V280.8H11.6Z" fill="#d4101c"/><path d="M12.6 279.6L17.8 275.4M14.4 275.6L17.4 280.4" stroke="#222" stroke-width="0.8"/><path d="M11.2 302.6H16.6L18.8 304.8V311.8H11.2Z M16.4 302.8V305H18.6" fill="none" stroke="#f0f6fa" stroke-width="0.8"/><rect x="10.2" y="332.4" width="9.8" height="7.2" rx="0.6" fill="none" stroke="#f0f6fa" stroke-width="0.8"/><path d="M11 338.6L13.8 335.6L15.6 337.4L17 336.2L19.4 338.6" fill="none" stroke="#f0f6fa" stroke-width="0.7"/><circle cx="17.3" cy="334.3" r="0.6" fill="#f0f6fa"/><polygon points="19.57,364.38 19.53,365.26 18.33,365.76 18.04,366.36 18.42,367.61 17.77,368.20 16.57,367.70 15.93,367.93 15.32,369.07 14.44,369.03 13.94,367.83 13.34,367.54 12.09,367.92 11.50,367.27 12.00,366.07 11.77,365.43 10.63,364.82 10.67,363.94 11.87,363.44 12.16,362.84 11.78,361.59 12.43,361.00 13.63,361.50 14.27,361.27 14.88,360.13 15.76,360.17 16.26,361.37 16.86,361.66 18.11,361.28 18.70,361.93 18.20,363.13 18.43,363.77" fill="none" stroke="#f0f6fa" stroke-width="0.8" stroke-linejoin="round"/><circle cx="15.1" cy="364.6" r="1.57" fill="none" stroke="#f0f6fa" stroke-width="0.8"/><path d="M12.6 390.4A4.3 4.3 0 1 0 17.6 390.4" fill="none" stroke="#f0f6fa" stroke-width="0.85"/><path d="M15.1 388.2V393" stroke="#f0f6fa" stroke-width="0.85"/></svg>
<svg style="left:0;top:0" width="768" height="432" viewBox="0 0 768 432"><polygon points="220.6,74.6 232.6,78.5 232.6,85.4 220.6,82.6" fill="#62bdf3"/><polygon points="221.4,75.8 231.8,79.2 231.8,84.4 221.4,81.8" fill="#7fcdf8"/><polygon points="225.2,84 229.6,85.2 229.6,86.6 225.2,85.4" fill="#dfe7ee"/><polygon points="216.2,87.8 221.2,85.8 229.2,89 224.6,91" fill="#f1f5f8"/><path d="M278.6 76.2H284.4L285.6 77.4H295.4V88.8H278.6Z" fill="#e6a02c"/><rect x="278.6" y="77.6" width="16.8" height="11.2" fill="#fbd973"/><path d="M280.8 88.8V82.6H293.2V88.8Z" fill="#eab940"/><rect x="283.6" y="85.6" width="6.8" height="3.2" fill="#fdf1c4"/><rect x="340.9" y="75.9" width="16.6" height="12.2" rx="0.8" fill="#a6dcf6" stroke="#226fae" stroke-width="0.9"/><circle cx="345.6" cy="81.2" r="2.9" fill="#f6b73c"/><path d="M345.6 81.2V78.3A2.9 2.9 0 0 1 348.5 81.2Z" fill="#2f86d2"/><path d="M350.4 78.6H355.4M350.4 80.8H355.4M350.4 83H355.4M343 85.8H355.4" stroke="#e9f6fd" stroke-width="1"/><rect x="216" y="134.8" width="16.2" height="21.8" rx="1.2" fill="#7c8691"/><rect x="218.4" y="137.2" width="11.4" height="3.3" fill="#4dd2e8"/><rect x="218.4" y="142.6" width="3.2" height="3.2" fill="#eef1f4"/><rect x="222.8" y="142.6" width="3.2" height="3.2" fill="#eef1f4"/><rect x="218.4" y="147.0" width="3.2" height="3.2" fill="#eef1f4"/><rect x="222.8" y="147.0" width="3.2" height="3.2" fill="#eef1f4"/><rect x="218.4" y="151.4" width="3.2" height="3.2" fill="#eef1f4"/><rect x="222.8" y="151.4" width="3.2" height="3.2" fill="#eef1f4"/><rect x="227.2" y="142.6" width="2.8" height="3.2" fill="#eef1f4"/><rect x="227.2" y="147" width="2.8" height="7.6" fill="#1c3a7c"/><defs><linearGradient id="ieg" x1="0" y1="0" x2="0" y2="1"><stop offset="0" stop-color="#9beafc"/><stop offset="1" stop-color="#45bdf0"/></linearGradient></defs><g transform="translate(288.4,144.3)"><path d="M-5.6 0.4H5.8A5.9 5.9 0 1 0 4.4 4.2" fill="none" stroke="url(#ieg)" stroke-width="3.1"/></g><path d="M280 152.4Q277.4 149 283.6 142.4Q290 136.2 295 136.4Q297 136.9 295.6 139.2" fill="none" stroke="#f2cf3c" stroke-width="1.7" stroke-linecap="round"/><defs><linearGradient id="ff1" x1="0.85" y1="0.1" x2="0.2" y2="0.95"><stop offset="0" stop-color="#ffe94a"/><stop offset="0.35" stop-color="#ffa320"/><stop offset="0.7" stop-color="#ff5a2e"/><stop offset="1" stop-color="#f0307a"/></linearGradient><radialGradient id="ff2" cx="0.5" cy="0.5" r="0.6"><stop offset="0" stop-color="#9b3bea"/><stop offset="1" stop-color="#6a2bd0"/></radialGradient><linearGradient id="ff3" x1="0.5" y1="0" x2="0.5" y2="1"><stop offset="0" stop-color="#fff15a"/><stop offset="1" stop-color="#ffb52a"/></linearGradient></defs><g transform="translate(349.4,145.6) scale(1.0000)"><path d="M-20.5 1C-21 -5 -19.5 -10 -17 -13.2C-16.4 -15 -14.6 -16.6 -13 -17.6C-13.4 -15.6 -13 -14 -12.2 -12.8C-11.6 -14.4 -10 -15.6 -8.2 -16C-8.6 -14.4 -8 -13.2 -7 -12.4C-4 -13.6 -1 -13.4 1.6 -12.6C0.4 -17 2 -22 5.6 -24.4C6 -20.4 9.4 -18.4 12.6 -15.4C17 -11.4 20.6 -5.4 20.4 1.6C20 12 11 20.5 0 20.5C-11 20.5 -20 12 -20.5 1Z" fill="url(#ff1)"/><path d="M5.6 -24.4C6 -20.4 9.4 -18.4 12.6 -15.4C17 -11.4 20.6 -5.4 20.4 1.6C19 -4 15 -7.4 10.6 -9.6C5 -12.4 0.6 -18 5.6 -24.4Z" fill="url(#ff3)"/><circle cx="-0.4" cy="-2.4" r="8.7" fill="url(#ff2)"/><path d="M-12.5 -7.5C-9 -10 -4.5 -9.6 -2 -7.4C1 -7.6 3.6 -6.6 5.2 -4.6C2.6 -5.2 0.4 -4.4 -1 -2.6C-3.6 -2 -6.4 -2.8 -8 -4.8C-10 -5.2 -11.6 -6 -12.5 -7.5Z" fill="#ff8a1e"/><path d="M-20.5 1C-18 8.6 -10.6 13.6 -2 12.8C5.6 12 10.4 7.4 11.4 1C13.6 6 12 12.6 7 16.6C2 20.4 -5.4 21.2 -11.6 17.4C-17 14 -20 8 -20.5 1Z" fill="#f0288a" opacity="0.55"/></g><polygon points="212.0,214.2 227.0,211.6 227.0,236.2 212.0,233.6" fill="#2b5797"/><text x="219.3" y="228.0" text-anchor="middle" font-family="Liberation Sans, sans-serif" font-weight="bold" font-size="10.5" fill="#fff">W</text><rect x="227.0" y="214.5" width="9.6" height="18.8" fill="#fff"/><rect x="228.2" y="216.60" width="7" height="1.1" fill="#2b5797"/><rect x="228.2" y="219.15" width="7" height="1.1" fill="#2b5797"/><rect x="228.2" y="221.70" width="7" height="1.1" fill="#2b5797"/><rect x="228.2" y="224.25" width="7" height="1.1" fill="#2b5797"/><rect x="228.2" y="226.80" width="7" height="1.1" fill="#2b5797"/><rect x="228.2" y="229.35" width="7" height="1.1" fill="#2b5797"/><polygon points="274.5,214.2 289.5,211.6 289.5,236.2 274.5,233.6" fill="#1f7244"/><text x="281.8" y="228.0" text-anchor="middle" font-family="Liberation Sans, sans-serif" font-weight="bold" font-size="10.5" fill="#fff">X</text><rect x="289.5" y="214.5" width="9.6" height="18.8" fill="#fff"/><rect x="289.5" y="216.70" width="9.6" height="0.9" fill="#1f7244" opacity="0.85"/><rect x="289.5" y="219.25" width="9.6" height="0.9" fill="#1f7244" opacity="0.85"/><rect x="289.5" y="221.80" width="9.6" height="0.9" fill="#1f7244" opacity="0.85"/><rect x="289.5" y="224.35" width="9.6" height="0.9" fill="#1f7244" opacity="0.85"/><rect x="289.5" y="226.90" width="9.6" height="0.9" fill="#1f7244" opacity="0.85"/><rect x="289.5" y="229.45" width="9.6" height="0.9" fill="#1f7244" opacity="0.85"/><rect x="293.9" y="214.5" width="0.9" height="18.8" fill="#1f7244" opacity="0.85"/><polygon points="336.7,214.2 351.7,211.6 351.7,236.2 336.7,233.6" fill="#b7391f"/><text x="344.0" y="228.0" text-anchor="middle" font-family="Liberation Sans, sans-serif" font-weight="bold" font-size="10.5" fill="#fff">P</text><rect x="351.7" y="214.5" width="9.6" height="18.8" fill="#fff"/><circle cx="356.3" cy="220.6" r="3.1" fill="#b7391f"/><path d="M356.3 220.6V216.79999999999998H360.09999999999997V220.6Z" fill="#fff"/><path d="M357.2 219.7V217.0A2.8 2.8 0 0 1 359.9 219.7Z" fill="#b7391f"/><rect x="352.9" y="225.79999999999998" width="7" height="1.2" fill="#b7391f"/><rect x="352.9" y="228.6" width="7" height="1.2" fill="#b7391f"/><polygon points="212,276.4 227,273.8 227,298.8 212,296.2" fill="#0f69b4"/><text x="219.4" y="290.2" text-anchor="middle" font-family="Liberation Sans, sans-serif" font-weight="bold" font-size="10.5" fill="#fff">O</text><rect x="227" y="280.4" width="9.3" height="11.8" fill="#fff"/><path d="M227 280.6L231.6 285.6L236.3 280.6" fill="none" stroke="#1482c9" stroke-width="1.2"/><path d="M277.4 281.2H297.2L296.2 299H294.4L294.6 283.8H279.6Z" fill="#c8102e"/><rect x="277.4" y="285.4" width="14.8" height="14.8" rx="1.6" fill="#fbfbfb" stroke="#888" stroke-width="0.4"/><text x="279.6" y="297" font-family="Liberation Sans, sans-serif" font-size="9.5" fill="#222">A</text><path d="M285.4 290.4L287 297.6L289.2 288.8" fill="none" stroke="#222" stroke-width="0.7"/><circle cx="291.2" cy="286.6" r="2.7" fill="#3be041"/><g transform="translate(47.8,255.6) scale(0.3220)"><path d="M-20.5 1C-21 -5 -19.5 -10 -17 -13.2C-16.4 -15 -14.6 -16.6 -13 -17.6C-13.4 -15.6 -13 -14 -12.2 -12.8C-11.6 -14.4 -10 -15.6 -8.2 -16C-8.6 -14.4 -8 -13.2 -7 -12.4C-4 -13.6 -1 -13.4 1.6 -12.6C0.4 -17 2 -22 5.6 -24.4C6 -20.4 9.4 -18.4 12.6 -15.4C17 -11.4 20.6 -5.4 20.4 1.6C20 12 11 20.5 0 20.5C-11 20.5 -20 12 -20.5 1Z" fill="url(#ff1)"/><path d="M5.6 -24.4C6 -20.4 9.4 -18.4 12.6 -15.4C17 -11.4 20.6 -5.4 20.4 1.6C19 -4 15 -7.4 10.6 -9.6C5 -12.4 0.6 -18 5.6 -24.4Z" fill="url(#ff3)"/><circle cx="-0.4" cy="-2.4" r="8.7" fill="url(#ff2)"/><path d="M-12.5 -7.5C-9 -10 -4.5 -9.6 -2 -7.4C1 -7.6 3.6 -6.6 5.2 -4.6C2.6 -5.2 0.4 -4.4 -1 -2.6C-3.6 -2 -6.4 -2.8 -8 -4.8C-10 -5.2 -11.6 -6 -12.5 -7.5Z" fill="#ff8a1e"/><path d="M-20.5 1C-18 8.6 -10.6 13.6 -2 12.8C5.6 12 10.4 7.4 11.4 1C13.6 6 12 12.6 7 16.6C2 20.4 -5.4 21.2 -11.6 17.4C-17 14 -20 8 -20.5 1Z" fill="#f0288a" opacity="0.55"/></g><g transform="translate(216.6,102.4) scale(0.82)"><path d="M0 0V11.4L2.6 9L4.6 13.2L6.2 12.4L4.3 8.4H7.8Z" fill="#fff" stroke="#111" stroke-width="0.8" stroke-linejoin="round"/></g></svg>
<div class="r" style="left:0px;top:408px;width:768px;height:24px;background:#37556b;"></div>
<div class="r" style="left:0px;top:408px;width:30px;height:24px;background:#64839a;"></div>
<div class="r" style="left:30px;top:408px;width:205px;height:24px;background:#ffffff;"></div>
<div class="t" style="left:52.60px;top:415px;font-size:9.4px;line-height:12px;color:#222;letter-spacing:-0.190px;">Suchbegriff hier eingeben</div>
<div class="t" style="left:259.00px;top:415px;font-size:7.6px;line-height:12px;color:#ffffff;letter-spacing:-0.335px;">SonaphoneDataSuit...</div>
<div class="t" style="left:355.80px;top:415px;font-size:7.6px;line-height:12px;color:#ffffff;letter-spacing:-0.295px;">OBS 26.0.0 (64-bit, ...</div>
<div class="r" style="left:239.3px;top:430.4px;width:91.2px;height:1.6px;background:#cfe3f1;"></div>
<div class="r" style="left:336.3px;top:430.4px;width:91.5px;height:1.6px;background:#cfe3f1;"></div>
<div class="t" style="left:705.30px;top:409px;font-size:7.3px;line-height:12px;color:#ffffff;letter-spacing:-0.047px;">09:19</div>
<div class="t" style="left:697.00px;top:421px;font-size:7.3px;line-height:12px;color:#ffffff;letter-spacing:-0.193px;">06.10.2020</div>
<div class="r" style="left:766.6px;top:408px;width:0.7px;height:24px;background:#8ea0ad;"></div>
<svg style="left:0;top:0" width="768" height="432" viewBox="0 0 768 432"><path d="M9.6 416L13.8 415.4V419.4H9.6Z M14.4 415.3L19.6 414.5V419.4H14.4Z M9.6 420H13.8V424L9.6 423.4Z M14.4 420H19.6V424.9L14.4 424.1Z" fill="#ffffff"/><circle cx="42.6" cy="418" r="2.7" fill="none" stroke="#222" stroke-width="0.8"/><path d="M40.6 420L36.6 424" stroke="#222" stroke-width="0.85"/><rect x="30.2" y="408.3" width="204.6" height="24" fill="none" stroke="#9cc3de" stroke-width="0.6"/><g transform="translate(250.3,420.2) scale(0.3073)"><path d="M-20.5 1C-21 -5 -19.5 -10 -17 -13.2C-16.4 -15 -14.6 -16.6 -13 -17.6C-13.4 -15.6 -13 -14 -12.2 -12.8C-11.6 -14.4 -10 -15.6 -8.2 -16C-8.6 -14.4 -8 -13.2 -7 -12.4C-4 -13.6 -1 -13.4 1.6 -12.6C0.4 -17 2 -22 5.6 -24.4C6 -20.4 9.4 -18.4 12.6 -15.4C17 -11.4 20.6 -5.4 20.4 1.6C20 12 11 20.5 0 20.5C-11 20.5 -20 12 -20.5 1Z" fill="url(#ff1)"/><path d="M5.6 -24.4C6 -20.4 9.4 -18.4 12.6 -15.4C17 -11.4 20.6 -5.4 20.4 1.6C19 -4 15 -7.4 10.6 -9.6C5 -12.4 0.6 -18 5.6 -24.4Z" fill="url(#ff3)"/><circle cx="-0.4" cy="-2.4" r="8.7" fill="url(#ff2)"/><path d="M-12.5 -7.5C-9 -10 -4.5 -9.6 -2 -7.4C1 -7.6 3.6 -6.6 5.2 -4.6C2.6 -5.2 0.4 -4.4 -1 -2.6C-3.6 -2 -6.4 -2.8 -8 -4.8C-10 -5.2 -11.6 -6 -12.5 -7.5Z" fill="#ff8a1e"/><path d="M-20.5 1C-18 8.6 -10.6 13.6 -2 12.8C5.6 12 10.4 7.4 11.4 1C13.6 6 12 12.6 7 16.6C2 20.4 -5.4 21.2 -11.6 17.4C-17 14 -20 8 -20.5 1Z" fill="#f0288a" opacity="0.55"/></g><circle cx="346.7" cy="420" r="6.6" fill="#151515" stroke="#e8e8e8" stroke-width="1.06"/><g transform="translate(346.7,420) scale(0.943)" fill="none" stroke="#e8e8e8" stroke-width="1.3"><path d="M-0.5 -4.8A3.2 3.2 0 0 1 2.2 0.2"/><path d="M4.4 2A3.2 3.2 0 0 1 -1.2 2.6"/><path d="M-4 2.8A3.2 3.2 0 0 1 -1.4 -2.6"/></g><circle cx="510.6" cy="420" r="5.2" fill="#151515" stroke="#e8e8e8" stroke-width="0.83"/><g transform="translate(510.6,420) scale(0.743)" fill="none" stroke="#e8e8e8" stroke-width="1.3"><path d="M-0.5 -4.8A3.2 3.2 0 0 1 2.2 0.2"/><path d="M4.4 2A3.2 3.2 0 0 1 -1.2 2.6"/><path d="M-4 2.8A3.2 3.2 0 0 1 -1.4 -2.6"/></g><circle cx="507.6" cy="422.6" r="1.5" fill="#e0202a"/><rect x="525.4" y="415.8" width="8.8" height="8.8" rx="1.5" fill="#8a2f9a"/><path d="M527 418L532.4 423M532.4 418L527 423" stroke="#f1d9f5" stroke-width="1"/><circle cx="529.8" cy="420.4" r="1" fill="#fff"/><rect x="544" y="415" width="9.4" height="2" fill="#c8102e"/><rect x="551.6" y="415" width="1.8" height="8" fill="#c8102e"/><rect x="544" y="416.8" width="7.6" height="8" rx="0.8" fill="#f4f4f4"/><circle cx="552" cy="415.8" r="1.3" fill="#3be041"/><text x="545" y="423.6" font-family="Liberation Sans, sans-serif" font-size="6" fill="#222">A</text><rect x="563.2" y="419.4" width="7.6" height="5.8" rx="0.6" fill="#f2f2f2"/><path d="M564.8 419.4V417.6A2.2 2.2 0 0 1 569.2 417.6V419.4" fill="none" stroke="#f2f2f2" stroke-width="1.1"/><rect x="566.5" y="421" width="1" height="2.4" fill="#33526a"/><path d="M584 415.6V425M588.8 418.4L584.4 421.8L589.2 425" fill="none" stroke="#f2f2f2" stroke-width="1.15"/><rect x="601" y="414.8" width="10.4" height="10.4" fill="#2fdc2f"/><text x="606.2" y="423.6" text-anchor="middle" font-family="Liberation Sans, sans-serif" font-weight="bold" font-size="8.6" fill="#fff">S</text><rect x="622.8" y="414.4" width="4.4" height="8" rx="2.2" fill="#e9eef2"/><path d="M621.4 420.6A3.6 3.6 0 0 0 628.6 420.6M625 424.2V426" fill="none" stroke="#b9c6cf" stroke-width="0.7"/><rect x="640.2" y="417.2" width="9" height="5.6" fill="none" stroke="#e9eef2" stroke-width="0.8"/><rect x="649.4" y="418.8" width="1" height="2.4" fill="#e9eef2"/><rect x="641.4" y="418.4" width="4" height="3.2" fill="#e9eef2"/><circle cx="647.6" cy="422.8" r="2.2" fill="#29b34a"/><path d="M660.4 424.6A6.6 6.6 0 0 1 667 418M662.6 424.6A4.4 4.4 0 0 1 667 420.2M664.6 424.6A2.4 2.4 0 0 1 667 422.2" fill="none" stroke="#aebbc5" stroke-width="0.7"/><circle cx="666.6" cy="424.4" r="0.7" fill="#e9eef2"/><path d="M677.4 418.8H679L681.4 416.6V424L679 421.8H677.4Z" fill="none" stroke="#d3dce3" stroke-width="0.7"/><path d="M683.4 418.6L686.2 421.4M686.2 418.6L683.4 421.4" stroke="#d3dce3" stroke-width="0.7"/><path d="M743.2 414.4H752.4V421.8H746.6L744.4 424V421.8H743.2Z" fill="#f2f4f6"/><path d="M744.8 416.6H750.8M744.8 418.4H750.8" stroke="#9fb0bd" stroke-width="0.6"/><circle cx="753" cy="424.6" r="3.9" fill="#1e77c2" stroke="#e9eef2" stroke-width="0.5"/><text x="753" y="426.6" text-anchor="middle" font-family="Liberation Sans, sans-serif" font-weight="bold" font-size="5.4" fill="#fff">21</text></svg>
</div></body></html>
